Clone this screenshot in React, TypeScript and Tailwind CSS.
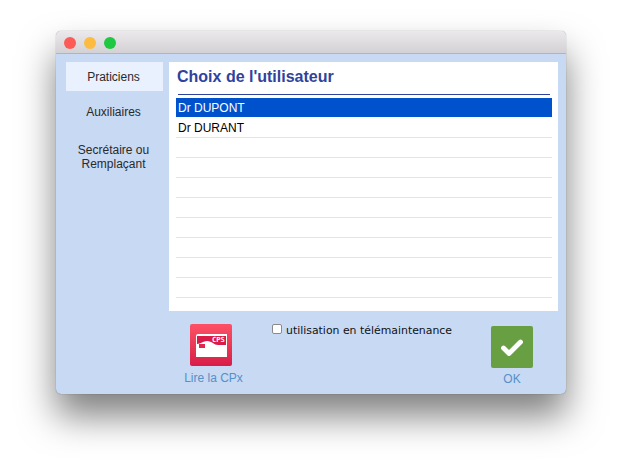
import React from "react";

const users = ["Dr DUPONT", "Dr DURANT", "", "", "", "", "", "", "", ""];

const CpsIcon = () => (
  <div className="w-[42px] h-[42px] rounded-[2px] bg-gradient-to-b from-[#fd5065] to-[#d81b47]">
    <svg width="42" height="42" viewBox="0 0 42 42">
      <path d="M8 10h29v23H6V12a2 2 0 0 1 2-2z" fill="#fff" />
      <path d="M7 12h29v9h-8c-4 0-6-4-11-4-4 0-6 3-10 3z" fill="#d81b47" />
      <rect x="9" y="20" width="6" height="4" fill="#e0284f" />
      <text x="22" y="18" fontSize="7" fontWeight="700" fill="#fff" fontFamily="'DejaVu Sans Mono', monospace">CPS</text>
    </svg>
  </div>
);

const OkIcon = () => (
  <div className="w-[42px] h-[42px] rounded-[2px] bg-[#689f43] flex items-center justify-center">
    <svg width="22" height="17" viewBox="0 0 22 17">
      <path d="M2.500 9l5.500 5.500L19.500 3" fill="none" stroke="#fff" strokeWidth="4.800" strokeLinecap="round" strokeLinejoin="round" />
    </svg>
  </div>
);

export default function App() {
  return (
    <div className="w-[622px] h-[474px] bg-white pt-[31px] pl-[56px] overflow-hidden font-['Liberation_Sans',sans-serif]">
      <div className="w-[510px] h-[363px] rounded-[5px] overflow-hidden flex flex-col bg-[#c8d9f3] shadow-[0_0_1px_rgba(0,0,0,0.5),0_22px_36px_rgba(0,0,0,0.5)]">
        {/* title bar */}
        <div className="h-[23px] shrink-0 flex items-center gap-[8px] pl-[8px] pt-[2px] bg-gradient-to-b from-[#ebe9eb] to-[#d3d1d3] border-b border-[#b5b3b5]">
          <span className="w-[12px] h-[12px] rounded-full bg-[#fc5b57]" />
          <span className="w-[12px] h-[12px] rounded-full bg-[#fdbb40]" />
          <span className="w-[12px] h-[12px] rounded-full bg-[#1ec840]" />
        </div>

        <div className="flex pt-[8px]">
          {/* sidebar */}
          <div className="w-[113px] shrink-0 pl-[10px] pr-[6px] text-[12px] text-[#2a2a2a] text-center">
            <div className="h-[29px] pr-[2px] flex items-center justify-center bg-[#e9f0fe]">Praticiens</div>
            <div className="h-[29px] pr-[2px] mt-[6px] flex items-center justify-center">Auxiliaires</div>
            <div className="mt-[17px] pr-[2px] leading-[14px]">
              Secrétaire ou
              <br />
              Remplaçant
            </div>
          </div>

          {/* list panel */}
          <div className="w-[389px] h-[249px] bg-white pl-[7px] pr-[6px]">
            <div className="pl-[1px] pt-[5px] text-[16px] leading-[19px] font-bold text-[#30439c]">Choix de l'utilisateur</div>
            <div className="mt-[8px] mx-[2px] h-px bg-[#30439c]" />
            <div className="mt-[3px] text-[12px]">
              {users.map((name, i) => (
                <div
                  key={i}
                  className={
                    i === 0
                      ? "h-[19px] mb-px pl-[2px] leading-[21px] bg-[#0052cc] text-white"
                      : "h-[20px] pl-[2px] leading-[20px] text-black border-b border-[#e4e4e4]"
                  }
                >
                  {name}
                </div>
              ))}
            </div>
          </div>
        </div>

        {/* footer */}
        <div className="flex">
          <div className="ml-[124px] w-[67px] pt-[13px] flex flex-col items-start text-[12px] text-[#5590c8]">
            <div className="ml-[10px]">
              <CpsIcon />
            </div>
            <span className="self-center mt-[5px] leading-[14px] whitespace-nowrap">Lire la CPx</span>
          </div>
          <div className="ml-[25px] w-[219px] pt-[14px] flex items-start gap-[4px] font-['DejaVu_Sans',sans-serif] text-[10.9px] leading-[12px] text-[#111]">
            <span className="-mt-[1px] w-[10px] h-[10px] rounded-[2px] bg-white border border-[#8a8a8a]" />
            <span className="whitespace-nowrap">utilisation en télémaintenance</span>
          </div>
          <div className="w-[42px] pt-[15px] flex flex-col items-center text-[12px] text-[#5590c8]">
            <OkIcon />
            <span className="mt-[4px] leading-[14px]">OK</span>
          </div>
        </div>
      </div>
    </div>
  );
}
